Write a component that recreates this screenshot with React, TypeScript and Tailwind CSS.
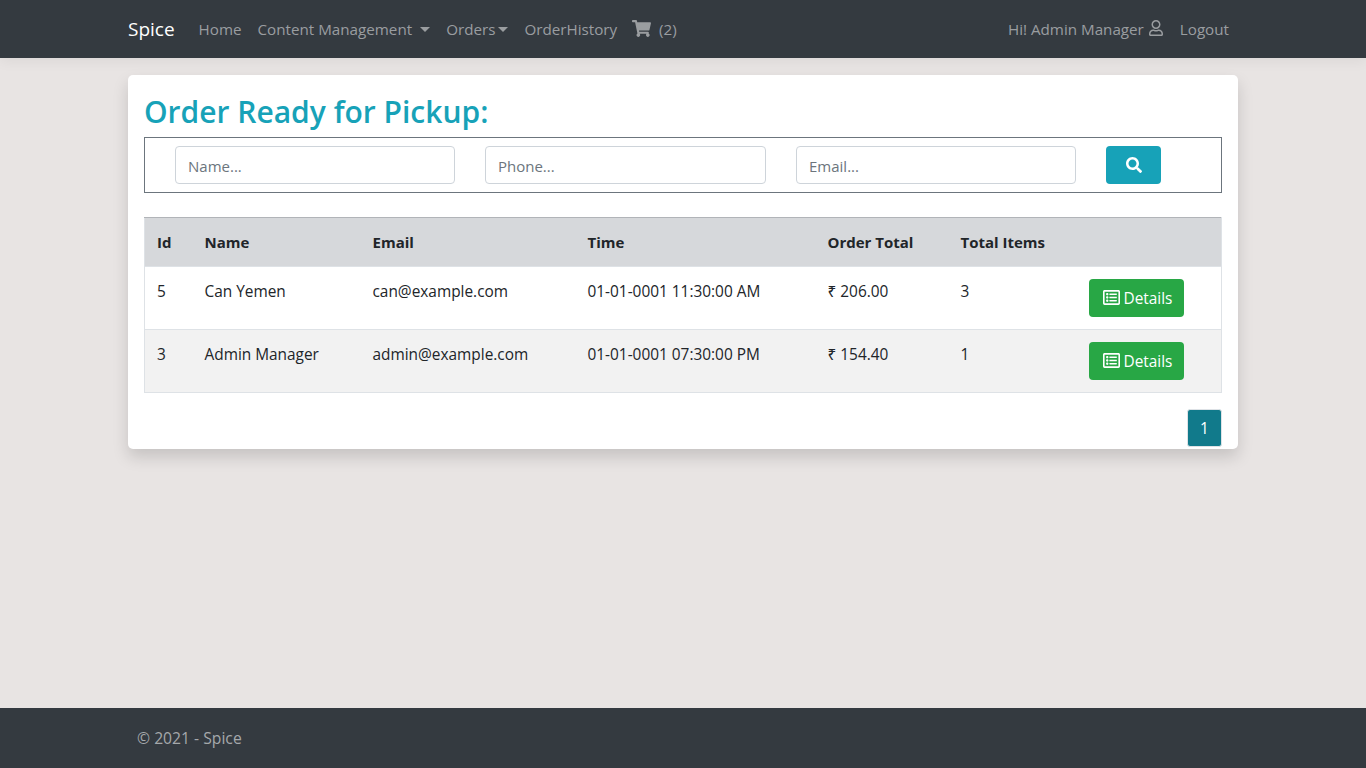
import { FaRegListAlt, FaRegUser, FaSearch, FaShoppingCart } from "react-icons/fa";

const orders = [
    { id: 5, name: "Can Yemen", email: "can@example.com", time: "01-01-0001 11:30:00 AM", total: "₹ 206.00", items: 3 },
    { id: 3, name: "Admin Manager", email: "admin@example.com", time: "01-01-0001 07:30:00 PM", total: "₹ 154.40", items: 1 },
];

const Caret = () => (
    <span className="inline-block w-0 h-0 border-t-[5px] border-x-[5px] border-t-current border-x-transparent" />
);

const App = () => {
    return (
        <div className="min-h-[768px] flex flex-col bg-[#e8e4e3] text-[#212529] text-[15.4px] font-['Open_Sans','Noto_Sans',sans-serif]">
            {/* Navbar */}
            <nav className="h-[58px] bg-[#343a40] shadow-[0_4px_12px_rgba(0,0,0,0.05)]">
                <div className="w-[1110px] mx-auto flex items-center h-full pt-px text-[#9a9da0] text-[15.2px]">
                    <a className="text-white text-[19px] mr-6">Spice</a>
                    <a className="mr-4">Home</a>
                    <a className="mr-4 flex items-center gap-2">Content Management<Caret /></a>
                    <a className="mr-4 flex items-center gap-[3px]">Orders<Caret /></a>
                    <a className="mr-[15px]">OrderHistory</a>
                    <a className="flex items-center gap-2"><FaShoppingCart className="text-[19px] -translate-y-px" /> (2)</a>
                    <div className="ml-auto flex items-center mr-[9px]">
                        <span className="flex items-center gap-1 mr-4">Hi! Admin Manager <FaRegUser className="text-[16px] -translate-y-px" /></span>
                        <a>Logout</a>
                    </div>
                </div>
            </nav>

            {/* Main card */}
            <main className="flex-1 pt-[17px]">
                <div className="w-[1110px] h-[374px] mx-auto bg-white rounded-[5px] px-4 shadow-[0_8px_16px_rgba(0,0,0,0.15)]">
                    <h2 className="text-[30px] leading-[38px] font-semibold text-[#17a2b8] pt-[18px] h-[55px]">Order Ready for Pickup:</h2>
                    <div className="mt-[7px] h-14 border border-[#6c757d] flex items-center pl-[30px] gap-[30px]">
                        <input placeholder="Name..." className="w-[280px] h-[38px] px-3 pt-px text-[15px] border border-[#ced4da] rounded placeholder:text-[#6c757d] outline-none" />
                        <input placeholder="Phone..." className="w-[281px] h-[38px] px-3 pt-px text-[15px] border border-[#ced4da] rounded placeholder:text-[#6c757d] outline-none" />
                        <input placeholder="Email..." className="w-[280px] h-[38px] px-3 pt-px text-[15px] border border-[#ced4da] rounded placeholder:text-[#6c757d] outline-none" />
                        <button className="w-[55px] h-[38px] rounded bg-[#17a2b8] text-white flex items-center justify-center">
                            <FaSearch className="text-[16px]" />
                        </button>
                    </div>

                    {/* Orders table */}
                    <table className="w-[1078px] mt-6 table-fixed border-collapse border border-[#dee2e6] border-t-[#b1b4b8]">
                        <thead>
                            <tr className="h-[49px] bg-[#d6d8db] text-left font-bold text-[15px]">
                                <th className="w-[48px] pl-3">Id</th>
                                <th className="w-[168px] pl-3">Name</th>
                                <th className="w-[215px] pl-3">Email</th>
                                <th className="w-[240px] pl-3">Time</th>
                                <th className="w-[133px] pl-3">Order Total</th>
                                <th className="w-[128px] pl-3">Total Items</th>
                                <th></th>
                            </tr>
                        </thead>
                        <tbody>
                            {orders.map((order, i) => (
                                <tr key={order.id} className={`h-[63px] border-t border-[#dee2e6] ${i % 2 === 1 ? "bg-[#f2f2f2]" : "bg-white"}`}>
                                    <td className="pl-3 pt-[13px] align-top">{order.id}</td>
                                    <td className="pl-3 pt-[13px] align-top">{order.name}</td>
                                    <td className="pl-3 pt-[13px] align-top">{order.email}</td>
                                    <td className="pl-3 pt-[13px] align-top">{order.time}</td>
                                    <td className="pl-3 pt-[13px] align-top">{order.total}</td>
                                    <td className="pl-3 pt-[13px] align-top">{order.items}</td>
                                    <td className="pl-3 pt-3 align-top">
                                        <button className="w-[95px] h-[38px] pt-px pl-[14px] rounded bg-[#28a745] text-white flex items-center gap-1">
                                            <FaRegListAlt className="text-[17px] -translate-y-px" /> Details
                                        </button>
                                    </td>
                                </tr>
                            ))}
                        </tbody>
                    </table>

                    <div className="flex justify-end mt-4">
                        <span className="w-[35px] h-[38px] pt-px rounded-[3px] bg-[#117a8b] border border-[#dee2e6] text-white font-medium flex items-center justify-center">1</span>
                    </div>
                </div>
            </main>

            {/* Footer */}
            <footer className="h-[60px] bg-[#343a40] text-[#a5a8ab]">
                <div className="w-[1110px] mx-auto h-full flex items-center pl-[9px] pt-px text-[15.7px]">© 2021 - Spice</div>
            </footer>
        </div>
    );
};

export default App;
